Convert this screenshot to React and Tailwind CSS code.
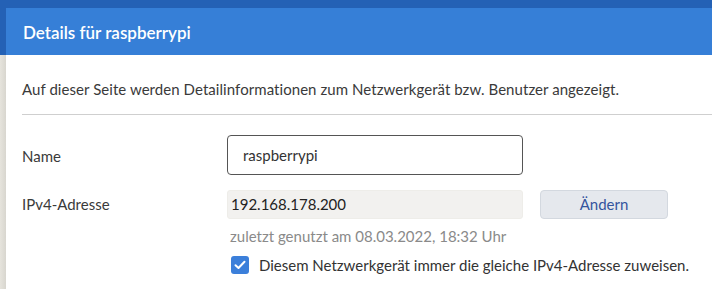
import React from "react";

export default function App() {
  const font = { fontFamily: "Lato, 'Liberation Sans', sans-serif" };
  return (
    <div className="w-[712px] h-[289px] flex flex-col bg-[#e9e7e2] overflow-hidden" style={font}>
      <div className="h-[8px] bg-[#2461b5] shrink-0" />
      <div className="flex flex-1">
        <div className="w-[6px] flex flex-col shrink-0">
          <div className="h-[47px] bg-[#2461b5]" />
          <div className="flex-1 bg-gradient-to-r from-[#e6e4dd] to-[#d8d6cf]" />
        </div>
        <div className="flex-1 flex flex-col bg-white">
          <div className="h-[47px] bg-[#367fd7] flex items-center pl-[17px] pt-[2px]">
            <span className="text-white text-[17px] font-semibold">Details für raspberrypi</span>
          </div>
          <div className="pl-[16px] pt-[24px]">
            <p className="text-[15px] leading-[20px] text-[#3a3a3a] tracking-[0.06px]">
              Auf dieser Seite werden Detailinformationen zum Netzwerkgerät bzw. Benutzer angezeigt.
            </p>
            <div className="mt-[15px] border-t border-[#cfcfcf]" />
            <div className="mt-[20px] flex items-center">
              <div className="w-[205px] text-[15px] text-[#3a3a3a] pt-[2px]">Name</div>
              <div className="w-[296px] h-[40px] border border-[#555] rounded-[4px] flex items-center pl-[15px] text-[15px] text-[#333]">
                raspberrypi
              </div>
            </div>
            <div className="mt-[15px] flex items-center">
              <div className="w-[205px] text-[15px] text-[#3a3a3a]">IPv4-Adresse</div>
              <div className="w-[296px] h-[29px] bg-[#f2f1ef] border border-[#eeede9] rounded-[3px] flex items-center pl-[3px] text-[15px] text-[#222]">
                192.168.178.200
              </div>
              <button className="ml-[17px] w-[128px] h-[29px] bg-[#e5e8ed] border border-[#d3d8df] rounded-[4px] text-[15px] text-[#34549e]">
                Ändern
              </button>
            </div>
            <div className="ml-[208px] mt-[7px] text-[15px] leading-[20px] text-[#8a8a8a]">
              zuletzt genutzt am 08.03.2022, 18:32 Uhr
            </div>
            <div className="ml-[209px] mt-[9px] flex items-center">
              <div className="w-[18px] h-[18px] rounded-[3px] bg-[#3b7fda] flex items-center justify-center">
                <svg width="12" height="10" viewBox="0 0 12 10" fill="none">
                  <path d="M1.5 5.2 L4.5 8 L10.5 1.8" stroke="white" strokeWidth="2" strokeLinecap="round" strokeLinejoin="round" />
                </svg>
              </div>
              <span className="ml-[10px] text-[15px] leading-[20px] text-[#333]">
                Diesem Netzwerkgerät immer die gleiche IPv4-Adresse zuweisen.
              </span>
            </div>
          </div>
        </div>
      </div>
    </div>
  );
}
